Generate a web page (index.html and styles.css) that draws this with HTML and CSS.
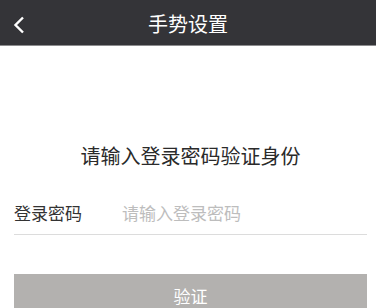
FILE: index.html
```html
<!DOCTYPE html>
<html lang="zh-CN">
<head>
  <meta charset="UTF-8">
  <title>手势设置</title>
  <link rel="stylesheet" href="styles.css">
</head>
<body>

  <div class="header">
    <span class="back">
      <svg width="12" height="18" viewBox="0 0 12 18">
        <path d="M10 1.5 L2.5 9 L10 16.5" fill="none" stroke="#fff" stroke-width="2.4"/>
      </svg>
    </span>
    <h1 class="title">手势设置</h1>
  </div>

  <div class="content">
    <p class="tip">请输入登录密码验证身份</p>

    <div class="field">
      <label class="field-label">登录密码</label>
      <input class="field-input" type="password" placeholder="请输入登录密码">
    </div>

    <button class="submit">验证</button>
  </div>

</body>
</html>
```

FILE: styles.css
```css
body {
  margin: 0;
  font-family: "Noto Sans CJK SC", "Noto Sans", sans-serif;
  background: #fff;
  overflow: hidden;
}

.header {
  position: relative;
  height: 45px;
  background: #343438;
  border-bottom: 1px solid #8c8c8e;
  display: flex;
  align-items: center;
  justify-content: center;
}

.back {
  position: absolute;
  left: 13px;
  top: 16px;
  display: flex;
}

.title {
  margin: 0;
  padding-top: 3px;
  color: #fff;
  font-size: 20px;
  font-weight: normal;
  line-height: 1;
}

.content {
  padding: 0 9px 0 14px;
}

.tip {
  margin: 98px 0 0;
  text-align: center;
  font-size: 20px;
  line-height: 24px;
  color: #2a2a2a;
}

.field {
  display: flex;
  align-items: center;
  margin-top: 23px;
  height: 43px;
  border-bottom: 1px solid #dcdcdc;
}

.field-label {
  width: 108px;
  font-size: 17px;
  color: #333;
}

.field-input {
  flex: 1;
  border: none;
  outline: none;
  padding: 0;
  font-family: inherit;
  font-size: 17px;
  color: #333;
  background: transparent;
}

.field-input::placeholder {
  color: #bdbdbd;
}

.submit {
  display: block;
  width: 100%;
  margin-top: 39px;
  height: 42px;
  border: none;
  border-radius: 0;
  background: #b3b1af;
  color: #fff;
  font-family: inherit;
  font-size: 17px;
  line-height: 1;
}
```
